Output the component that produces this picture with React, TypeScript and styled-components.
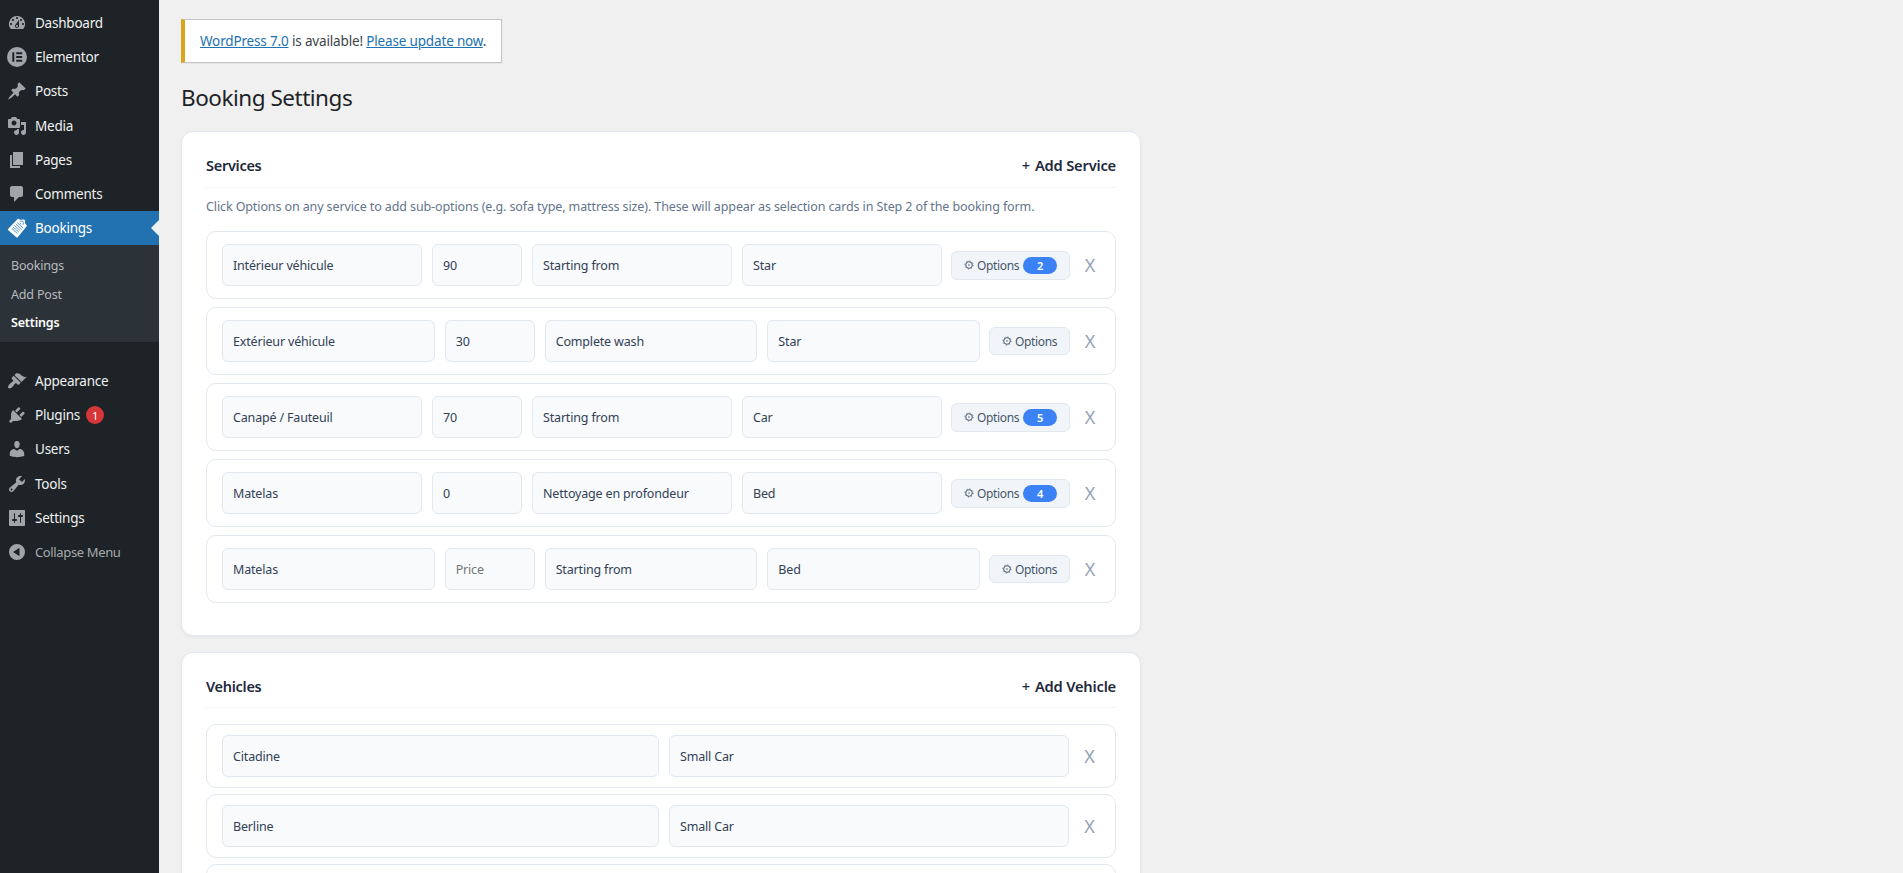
import React from "react";
import styled, { createGlobalStyle } from "styled-components";

const GlobalStyle = createGlobalStyle`
  *, *::before, *::after { box-sizing: border-box; }
  html, body { margin: 0; height: 100%; overflow: hidden; background: #f0f0f1; }
  body, input, button { font-family: "Noto Sans", "Open Sans", sans-serif; }
`;

const Shell = styled.div`
  display: flex;
  height: 873px;
  overflow: hidden;
  font-size: 13px;
  color: #3c434a;
  background: #f0f0f0;
`;

const Sidebar = styled.nav`
  flex: none;
  width: 159px;
  padding-top: 6px;
  background: #1d2327;
`;

const MenuList = styled.ul<{ $gap?: number }>`
  list-style: none;
  margin: 0;
  margin-top: ${(p) => p.$gap ?? 0}px;
  padding: 0;
`;

const MenuItem = styled.li<{ $active?: boolean; $muted?: boolean }>`
  position: relative;
  display: flex;
  align-items: center;
  height: 34.17px;
  padding-left: 7px;
  gap: 8px;
  font-size: ${(p) => (p.$muted ? 13 : 13.5)}px;
  letter-spacing: ${(p) => (p.$muted ? -0.36 : -0.23)}px;
  white-space: nowrap;
  color: ${(p) => (p.$muted ? "#a7aaad" : p.$active ? "#fff" : "#f0f0f1")};
  background: ${(p) => (p.$active ? "#2271b1" : "transparent")};

  svg {
    flex: none;
    fill: ${(p) => (p.$active ? "#fff" : "#a0a5aa")};
  }
`;

const ActiveArrow = styled.span`
  position: absolute;
  right: 0;
  top: 9px;
  border: 8px solid transparent;
  border-left-width: 0;
  border-right-color: #f0f0f0;
`;

const CountBubble = styled.span`
  display: grid;
  place-items: center;
  width: 18px;
  height: 18px;
  margin-left: -2px;
  border-radius: 9px;
  background: #d63638;
  color: #fff;
  font-size: 11px;
`;

const Submenu = styled.ul`
  list-style: none;
  margin: 0;
  padding: 7px 0 4px;
  height: 97px;
  background: #2c3338;
`;

const SubItem = styled.li<{ $current?: boolean }>`
  height: 28.5px;
  line-height: 28.5px;
  padding-left: 11px;
  font-size: 12.5px;
  letter-spacing: -0.17px;
  font-weight: ${(p) => (p.$current ? 600 : 400)};
  color: ${(p) => (p.$current ? "#fff" : "#b4b9be")};
`;

const Content = styled.main`
  flex: none;
  width: 982px;
  padding: 19px 0 0 22px;
`;

const Notice = styled.div`
  width: 321px;
  height: 44px;
  padding-left: 15px;
  border: 1px solid #c3c4c7;
  border-left: 4px solid #dba617;
  background: #fff;
  box-shadow: 0 1px 1px rgba(0, 0, 0, 0.04);
  font-size: 13.5px;
  letter-spacing: -0.16px;
  line-height: 43px;
  white-space: nowrap;

  a { color: #2271b1; text-decoration: underline; }
`;

const Title = styled.h1`
  margin: 18px 0 18px;
  height: 32px;
  line-height: 33px;
  font-size: 22.5px;
  letter-spacing: -0.48px;
  font-weight: 400;
  color: #1d2327;
`;

const Card = styled.section<{ $height: number }>`
  height: ${(p) => p.$height}px;
  margin-bottom: 16px;
  padding: 15px 24px;
  border: 1px solid #e2e8f0;
  border-radius: 12px;
  background: #fff;
  box-shadow: 0 1px 3px rgba(0, 0, 0, 0.05);
`;

const CardHead = styled.header<{ $height: number }>`
  display: flex;
  align-items: center;
  justify-content: space-between;
  height: ${(p) => p.$height}px;
  border-bottom: 1px solid #f1f5f9;
  padding-bottom: 4px;
  font-size: 14.5px;
  letter-spacing: -0.28px;
  font-weight: 600;
  color: #1e293b;
`;

const AddLink = styled.button`
  display: flex;
  gap: 5px;
  padding: 0;
  border: 0;
  background: none;
  color: inherit;
  font-size: 14.7px;
  font-weight: 600;
  letter-spacing: -0.2px;
`;

const Plus = styled.span`
  font-weight: 500;
`;

const Help = styled.p`
  margin: 0;
  height: 43px;
  line-height: 37px;
  font-size: 12.5px;
  letter-spacing: -0.108px;
  white-space: nowrap;
  color: #64748b;
`;

const Rows = styled.div<{ $gap: number; $top?: number }>`
  display: flex;
  flex-direction: column;
  gap: ${(p) => p.$gap}px;
  padding-top: ${(p) => p.$top ?? 0}px;
`;

const Row = styled.div<{ $pad: number }>`
  display: flex;
  align-items: center;
  gap: 10px;
  padding: ${(p) => p.$pad}px 15px;
  border: 1px solid #e2e8f0;
  border-radius: 10px;
  background: #fff;
`;

const Field = styled.input<{ $w?: number }>`
  ${(p) => (p.$w ? `flex: none; width: ${p.$w}px;` : "flex: 1 1 0; width: 0; min-width: 0;")}
  height: 42px;
  padding: 0 10px;
  border: 1px solid #e2e8f0;
  border-radius: 6px;
  background: #f8fafc;
  color: #334155;
  font-size: 12.5px;
  letter-spacing: -0.17px;
  outline: none;

  &::placeholder { color: #757575; opacity: 1; }
`;

const OptionsButton = styled.button<{ $wide: boolean }>`
  flex: none;
  display: flex;
  align-items: center;
  width: ${(p) => (p.$wide ? 119 : 81)}px;
  height: ${(p) => (p.$wide ? 29 : 28)}px;
  margin-left: -1px;
  padding: 0 12px;
  border: 1px solid #e2e8f0;
  border-radius: 6px;
  background: #f1f5f9;
  color: #475569;
  font-size: 12px;
  letter-spacing: -0.35px;

  svg { flex: none; margin-right: 3px; }
`;

const OptionCount = styled.span`
  display: grid;
  place-items: center;
  flex: none;
  width: 34px;
  height: 17px;
  margin-left: auto;
  border-radius: 9px;
  background: #3b82f6;
  color: #fff;
  font-size: 11px;
  font-weight: 600;
`;

const Remove = styled.button<{ $w: number }>`
  flex: none;
  width: ${(p) => p.$w}px;
  padding: 0;
  border: 0;
  background: none;
  color: #94a3b8;
  font-size: 18px;
  line-height: 24px;
`;

const ICONS = {
  dashboard:
    "M3.76 16h12.48A7.998 7.998 0 0 0 10 3a7.998 7.998 0 0 0-6.24 13zM10 4c.55 0 1 .45 1 1s-.45 1-1 1-1-.45-1-1 .45-1 1-1zM6 6c.55 0 1 .45 1 1s-.45 1-1 1-1-.45-1-1 .45-1 1-1zm8 0c.55 0 1 .45 1 1s-.45 1-1 1-1-.45-1-1 .45-1 1-1zm-5.37 5.55L12 7v6c0 1.1-.9 2-2 2s-2-.9-2-2c0-.57.24-1.08.63-1.45zM4 10c.55 0 1 .45 1 1s-.45 1-1 1-1-.45-1-1 .45-1 1-1zm12 0c.55 0 1 .45 1 1s-.45 1-1 1-1-.45-1-1 .45-1 1-1zm-5 3c0-.55-.45-1-1-1s-1 .45-1 1 .45 1 1 1 1-.45 1-1z",
  elementor: "M10 0a10 10 0 1 0 0 20 10 10 0 0 0 0-20zM5.3 5.2h2v9.6h-2zM9.2 5.2h6v2h-6zM9.2 9h6v2h-6zM9.2 12.8h6v2h-6z",
  posts:
    "M10.44 3.02l1.82-1.82 6.36 6.35-1.83 1.82c-1.05-.68-2.48-.57-3.41.36l-.75.75c-.92.93-1.04 2.35-.35 3.41l-1.83 1.82-2.41-2.41-2.8 2.79c-.42.42-3.38 2.71-3.8 2.29s1.86-3.39 2.28-3.81l2.79-2.79L4.1 9.36l1.83-1.82c1.05.69 2.48.57 3.4-.36l.75-.75c.93-.92 1.05-2.35.36-3.41z",
  media:
    "M13 11V4c0-.55-.45-1-1-1h-1.67L9 1H5L3.67 3H2c-.55 0-1 .45-1 1v7c0 .55.45 1 1 1h10c.55 0 1-.45 1-1zM7 4.5c1.38 0 2.5 1.12 2.5 2.5S8.38 9.5 7 9.5 4.5 8.38 4.5 7 5.62 4.5 7 4.5zM14 6h5v10.5c0 1.38-1.12 2.5-2.5 2.5S14 17.88 14 16.5s1.12-2.5 2.5-2.5c.17 0 .34.02.5.05V9h-3V6zm-4 8.05V13h2v3.5c0 1.38-1.12 2.5-2.5 2.5S7 17.88 7 16.5 8.12 14 9.5 14c.17 0 .34.02.5.05z",
  pages: "M6 15V2h10v13H6zm-1 1h8v2H3V5h2v11z",
  comments: "M5 2h9c1.1 0 2 .9 2 2v7c0 1.1-.9 2-2 2h-2l-5 5v-5H5c-1.1 0-2-.9-2-2V4c0-1.1.9-2 2-2z",
  appearance:
    "M14.48 11.06L7.41 3.99l1.5-1.5c.5-.56 2.3-.47 3.51.32 1.21.8 1.43 1.28 2.91 2.1 1.18.64 2.45 1.26 4.45.85zm-.71.71L6.7 4.7 4.93 6.47c-.39.39-.39 1.02 0 1.41l1.06 1.06c.39.39.39 1.03 0 1.42-.6.6-1.43 1.11-2.21 1.69-.35.26-.7.53-1.01.84C1.43 14.23.4 16.08 1.4 17.07c.99 1 2.84-.03 4.18-1.36.31-.31.58-.66.85-1.02.57-.78 1.08-1.61 1.69-2.21.39-.39 1.02-.39 1.41 0l1.06 1.06c.39.39 1.02.39 1.41 0z",
  plugins:
    "M13.11 4.36L9.87 7.6 8 5.73l3.24-3.24c.35-.34 1.05-.2 1.56.32.52.51.66 1.21.31 1.55zm-8 1.77l.91-1.12 9.01 9.01-1.19.84c-.71.71-2.63 1.16-3.82 1.16H6.14L4.9 17.26c-.59.59-1.54.59-2.12 0-.59-.58-.59-1.53 0-2.12l1.24-1.24v-3.88c0-1.13.4-3.19 1.09-3.89zm7.26 3.97l3.24-3.24c.34-.35 1.04-.21 1.55.31.52.51.66 1.21.31 1.55l-3.24 3.25z",
  users:
    "M10 9.25c-2.27 0-2.73-3.44-2.73-3.44C7 4.02 7.82 2 9.97 2c2.16 0 2.98 2.02 2.71 3.81 0 0-.41 3.44-2.68 3.44zm0 2.57L12.72 10c2.39 0 4.52 2.33 4.52 4.53v2.49s-3.65 1.13-7.24 1.13c-3.65 0-7.24-1.13-7.24-1.13v-2.49c0-2.25 1.94-4.48 4.47-4.48z",
  tools:
    "M16.68 9.77c-1.34 1.34-3.3 1.67-4.95.99l-5.41 6.52c-.99.99-2.59.99-3.58 0s-.99-2.59 0-3.57l6.52-5.42c-.68-1.65-.35-3.61.99-4.95 1.28-1.28 3.12-1.62 4.72-1.06l-2.89 2.89 2.82 2.82 2.86-2.87c.53 1.58.18 3.39-1.08 4.65zM3.81 16.21c.4.39 1.04.39 1.43 0 .4-.4.4-1.04 0-1.43-.39-.4-1.03-.4-1.43 0-.39.39-.39 1.03 0 1.43z",
  settings:
    "M18 17V3c0-.55-.45-1-1-1H3c-.55 0-1 .45-1 1v14c0 .55.45 1 1 1h14c.55 0 1-.45 1-1zM8 11h1c.55 0 1 .45 1 1s-.45 1-1 1H8v1.5c0 .28-.22.5-.5.5s-.5-.22-.5-.5V13H6c-.55 0-1-.45-1-1s.45-1 1-1h1V5.5c0-.28.22-.5.5-.5s.5.22.5.5V11zm5-2h-1c-.55 0-1-.45-1-1s.45-1 1-1h1V5.5c0-.28.22-.5.5-.5s.5.22.5.5V7h1c.55 0 1 .45 1 1s-.45 1-1 1h-1v5.5c0 .28-.22.5-.5.5s-.5-.22-.5-.5V9z",
  collapse: "M10 2a8 8 0 1 0 0 16 8 8 0 0 0 0-16zM12.5 5.8v8.4L6 10z",
};

type IconName = keyof typeof ICONS;

const MenuIcon = ({ name }: { name: IconName }) => (
  <svg width="20" height="20" viewBox="0 0 20 20" fillRule="evenodd">
    <path d={ICONS[name]} />
  </svg>
);

const TicketsIcon = () => (
  <svg width="20" height="20" viewBox="0 0 20 20">
    <path d="M1.2 10.8 10.4 1.2c.5-.5 1-.6 1.6-.1l.9.7 3.5-.4c.9 0 1.5.5 1.6 1.400l.1 2.700 1.400 1.500c.5.5.5 1 0 1.600L10.900 18.900c-.6.6-1.200.7-1.900.2L1.300 12.300c-.6-.5-.6-1-.1-1.500z" />
    <g stroke="#2271b1" strokeWidth="0.75" fill="none">
      <path d="M10.200 4.600l5.900 5.400M8.800 6l5.900 5.400M7.400 7.400l5.900 5.400M6 8.800l5.900 5.400M4.600 10.200l5.900 5.400" />
      <path d="M12.700 3.200h2.500c.7 0 1.100.4 1.100 1.100v2.300M13 5.200l1.300 1.200" />
    </g>
  </svg>
);

const GearIcon = () => (
  <svg width="10" height="10" viewBox="0 0 10 10" fill="none" stroke="#475569">
    <circle cx="5" cy="5" r="3.3" strokeWidth="0.95" />
    <circle cx="5" cy="5" r="4.1" strokeWidth="0.9" strokeDasharray="1.1 2.12" />
    <circle cx="5" cy="5" r="0.75" fill="#475569" stroke="none" />
  </svg>
);

const mainMenu: { icon: IconName; label: string }[] = [
  { icon: "dashboard", label: "Dashboard" },
  { icon: "elementor", label: "Elementor" },
  { icon: "posts", label: "Posts" },
  { icon: "media", label: "Media" },
  { icon: "pages", label: "Pages" },
  { icon: "comments", label: "Comments" },
];

const adminMenu: { icon: IconName; label: string; count?: number }[] = [
  { icon: "appearance", label: "Appearance" },
  { icon: "plugins", label: "Plugins", count: 1 },
  { icon: "users", label: "Users" },
  { icon: "tools", label: "Tools" },
  { icon: "settings", label: "Settings" },
];

const services = [
  { name: "Intérieur véhicule", price: "90", note: "Starting from", icon: "Star", options: 2 },
  { name: "Extérieur véhicule", price: "30", note: "Complete wash", icon: "Star", options: 0 },
  { name: "Canapé / Fauteuil", price: "70", note: "Starting from", icon: "Car", options: 5 },
  { name: "Matelas", price: "0", note: "Nettoyage en profondeur", icon: "Bed", options: 4 },
  { name: "Matelas", price: "", note: "Starting from", icon: "Bed", options: 0 },
];

const vehicles = [
  { name: "Citadine", type: "Small Car" },
  { name: "Berline", type: "Small Car" },
  { name: "", type: "" },
];

export default function App() {
  return (
    <Shell>
      <GlobalStyle />
      <Sidebar>
        <MenuList>
          {mainMenu.map((m) => (
            <MenuItem key={m.label}>
              <MenuIcon name={m.icon} />
              {m.label}
            </MenuItem>
          ))}
          <MenuItem $active>
            <TicketsIcon />
            Bookings
            <ActiveArrow />
          </MenuItem>
        </MenuList>
        <Submenu>
          <SubItem>Bookings</SubItem>
          <SubItem>Add Post</SubItem>
          <SubItem $current>Settings</SubItem>
        </Submenu>
        <MenuList $gap={22}>
          {adminMenu.map((m) => (
            <MenuItem key={m.label}>
              <MenuIcon name={m.icon} />
              {m.label}
              {m.count && <CountBubble>{m.count}</CountBubble>}
            </MenuItem>
          ))}
          <MenuItem $muted>
            <MenuIcon name="collapse" />
            Collapse Menu
          </MenuItem>
        </MenuList>
      </Sidebar>

      <Content>
        <Notice>
          <a>WordPress 7.0</a> is available! <a>Please update now</a>.
        </Notice>
        <Title>Booking Settings</Title>

        <Card $height={505}>
          <CardHead $height={41}>
            <span>Services</span>
            <AddLink>
              <Plus>+</Plus>Add Service
            </AddLink>
          </CardHead>
          <Help>
            Click Options on any service to add sub-options (e.g. sofa type, mattress size). These will appear as
            selection cards in Step 2 of the booking form.
          </Help>
          <Rows $gap={8}>
            {services.map((s, i) => (
              <Row key={i} $pad={12}>
                <Field defaultValue={s.name} />
                <Field $w={90} defaultValue={s.price} placeholder="Price" />
                <Field defaultValue={s.note} />
                <Field defaultValue={s.icon} />
                <OptionsButton $wide={s.options > 0}>
                  <GearIcon />
                  Options
                  {s.options > 0 && <OptionCount>{s.options}</OptionCount>}
                </OptionsButton>
                <Remove $w={20}>X</Remove>
              </Row>
            ))}
          </Rows>
        </Card>

        <Card $height={400}>
          <CardHead $height={40}>
            <span>Vehicles</span>
            <AddLink>
              <Plus>+</Plus>Add Vehicle
            </AddLink>
          </CardHead>
          <Rows $gap={6} $top={16}>
            {vehicles.map((v, i) => (
              <Row key={i} $pad={10}>
                <Field defaultValue={v.name} />
                <Field $w={400} defaultValue={v.type} />
                <Remove $w={21}>{v.name && "X"}</Remove>
              </Row>
            ))}
          </Rows>
        </Card>
      </Content>
    </Shell>
  );
}
